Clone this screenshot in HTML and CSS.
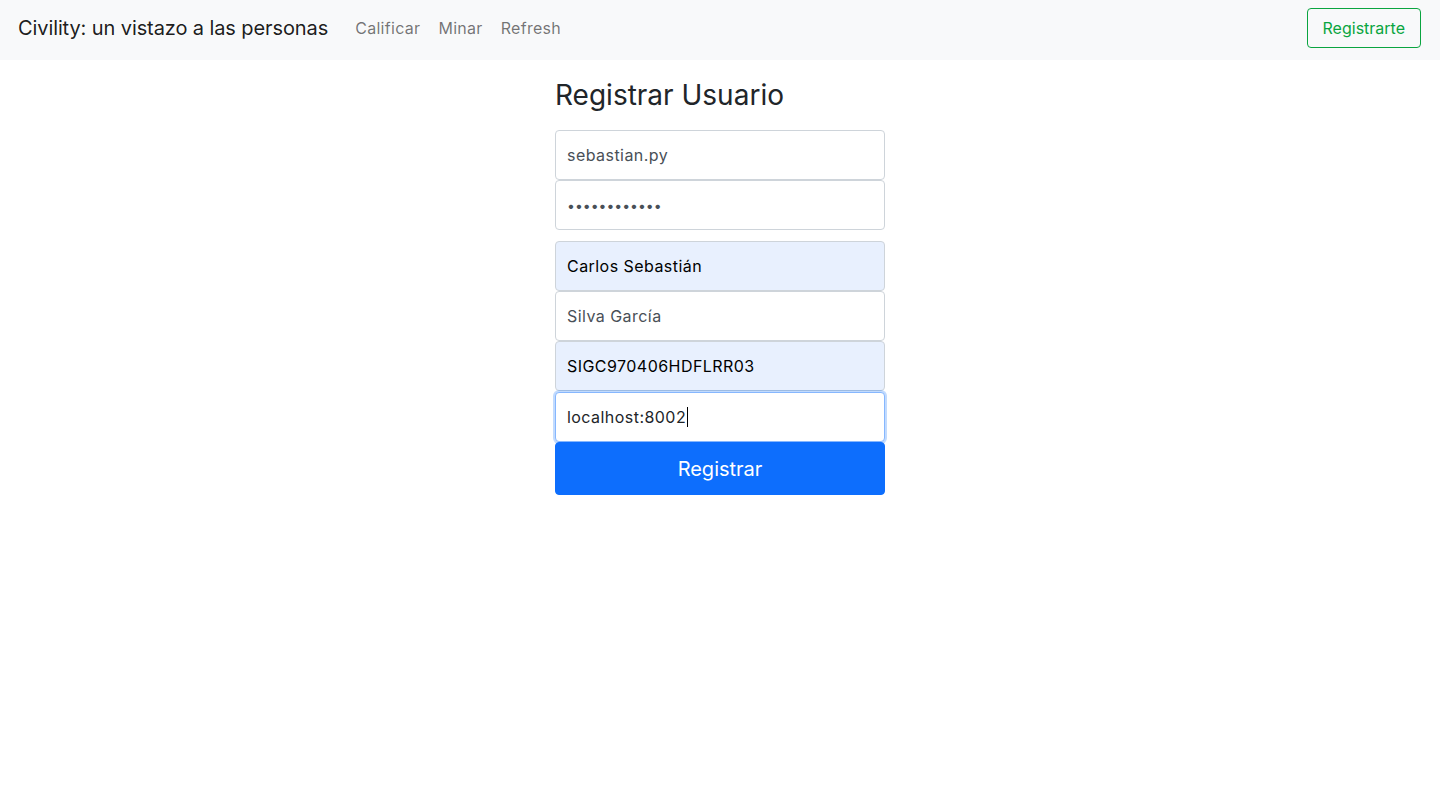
FILE: index.html
```html
<!DOCTYPE html>
<html lang="es">
<head>
<meta charset="utf-8">
<title>Civility</title>
<link rel="stylesheet" href="styles.css">
</head>
<body>
<nav class="navbar">
  <a class="brand" href="#">Civility: un vistazo a las personas</a>
  <ul class="nav">
    <li><a class="nav-link" href="#">Calificar</a></li>
    <li><a class="nav-link" href="#">Minar</a></li>
    <li><a class="nav-link" href="#">Refresh</a></li>
  </ul>
  <button class="btn-outline">Registrarte</button>
</nav>
<main class="form-wrap">
  <h3 class="title">Registrar Usuario</h3>
  <form class="form">
    <div class="group">
      <input class="field" type="text" value="sebastian.py">
      <input class="field pass" type="password" value="abcdefghijkl">
    </div>
    <div class="group">
      <input class="field autofill" type="text" value="Carlos Sebastián">
      <input class="field" type="text" value="Silva García">
      <input class="field autofill" type="text" value="SIGC970406HDFLRR03">
      <div class="field focused">localhost:8002<span class="caret"></span></div>
      <button class="btn-primary" type="button">Registrar</button>
    </div>
  </form>
</main>
</body>
</html>
```

FILE: styles.css
```css
* { box-sizing: border-box; }
body {
  margin: 0;
  font-family: Inter, "Noto Sans", sans-serif;
  color: #212529;
  background: #fff;
}
.navbar {
  display: flex;
  align-items: center;
  height: 60px;
  padding: 8px 19px 12px 18px;
  background: #f8f9fa;
}
.brand {
  font-size: 20px;
  color: rgba(0,0,0,.9);
  text-decoration: none;
  margin-right: 27px;
  letter-spacing: -0.1px;
}
.nav {
  display: flex;
  gap: 18px;
  list-style: none;
  margin: 0;
  padding: 0;
  flex: 1;
}
.nav-link {
  font-size: 16px;
  letter-spacing: 0.3px;
  color: rgba(0,0,0,.55);
  text-decoration: none;
}
.btn-outline {
  height: 40px;
  padding: 0 15px;
  font: inherit;
  font-size: 16px;
  color: #0aa540;
  background: transparent;
  border: 1px solid #0aa540;
  border-radius: 4px;
}
.form-wrap {
  width: 330px;
  margin: 0 auto;
}
.title {
  font-size: 28px;
  font-weight: 400;
  line-height: 34px;
  margin: 18px 0 18px;
  color: #212529;
}
.group {
  display: flex;
  flex-direction: column;
}
.group + .group { margin-top: 11px; }
.field {
  display: block;
  width: 100%;
  height: 50px;
  padding: 0 11px;
  font: inherit;
  font-size: 16px;
  letter-spacing: 0.45px;
  line-height: 48px;
  color: #495057;
  background: #fff;
  border: 1px solid #ced4da;
  border-radius: 4px;
  outline: none;
}
.pass { font-size: 14px; letter-spacing: 0; }
.autofill {
  background: #e8f0fe;
  color: #000;
}
.focused {
  margin-top: 1px;
  border-color: #86b7fe;
  box-shadow: 0 0 0 2px rgba(13,110,253,.25);
  color: #212529;
  display: flex;
  align-items: center;
  line-height: normal;
}
.caret {
  display: inline-block;
  width: 1px;
  height: 20px;
  background: #000;
  margin-left: 1px;
}
.btn-primary {
  position: relative;
  height: 53px;
  font: inherit;
  font-size: 20px;
  color: #fff;
  background: #0d6efd;
  border: 1px solid #0d6efd;
  border-radius: 4px;
}
```
